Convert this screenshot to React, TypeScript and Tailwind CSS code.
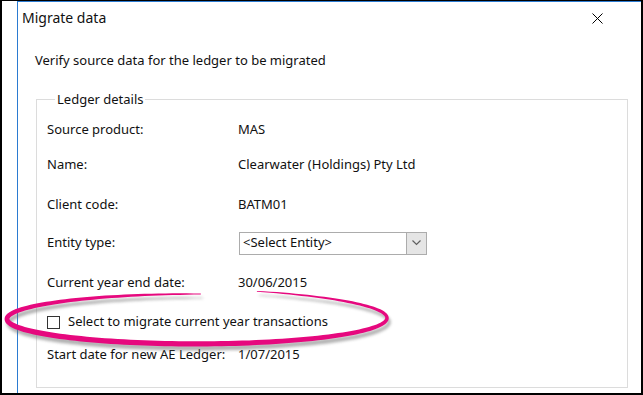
const font = "font-['Segoe_UI','Noto_Sans',sans-serif]"

function buildRing() {
  const cx = 195
  const cy = 318
  const rx = 190
  const ry = 25
  const t0 = Math.PI * 1.5 + 0.02
  const t1 = -1.25
  const n = 160
  const outer: string[] = []
  const inner: string[] = []
  for (let i = 0; i <= n; i++) {
    const s = i / n
    const t = t0 + (t1 - t0) * s
    const lift = -4 * Math.pow(s, 6)
    const x = cx + rx * Math.cos(t)
    const y = cy + ry * Math.sin(t) + lift
    let dx = -rx * Math.sin(t)
    let dy = ry * Math.cos(t)
    const len = Math.hypot(dx, dy) || 1
    dx /= len
    dy /= len
    const w = 0.8 + 5.6 * Math.pow(Math.sin(Math.PI * s), 0.7) * (1 - 0.4 * s)
    outer.push(`${(x - dy * w / 2).toFixed(2)},${(y + dx * w / 2).toFixed(2)}`)
    inner.push(`${(x + dy * w / 2).toFixed(2)},${(y - dx * w / 2).toFixed(2)}`)
  }
  return 'M' + outer.join(' L') + ' L' + inner.reverse().join(' L') + ' Z'
}

function Ring() {
  const d = buildRing()
  return (
    <svg className="absolute inset-0 pointer-events-none" width={643} height={395} viewBox="0 0 643 395">
      <defs>
        <filter id="ringShadow" x="-10%" y="-50%" width="120%" height="200%">
          <feGaussianBlur stdDeviation="1.8" />
        </filter>
      </defs>
      <path d={d} fill="#6f6f6f" opacity={0.55} transform="translate(2 4)" filter="url(#ringShadow)" />
      <path d={d} fill="#e6087e" />
    </svg>
  )
}

function Row({ label, children, className = '' }: { label: string; children?: React.ReactNode; className?: string }) {
  return (
    <div className={['flex items-center h-[20px]', className].join(' ')}>
      <div className="w-[191px] shrink-0">{label}</div>
      <div className="flex items-center">{children}</div>
    </div>
  )
}

export default function App() {
  return (
    <div className={`relative w-[643px] h-[395px] bg-white border-black border-t border-l-2 border-r-2 border-b-2 flex text-[13px] text-[#111] ${font}`}>
      <div className="w-[15px] shrink-0" />
      <div className="flex-1 flex flex-col border-l border-t border-[#2b7bd1]">
        {/* title bar */}
        <div className="h-[32px] flex items-center justify-between pl-[4px] pr-[38px] shrink-0">
          <span className="text-[14px] leading-none">Migrate data</span>
          <svg width="11" height="11" viewBox="0 0 11 11">
            <path d="M0.5 0.5 L10.5 10.5 M10.5 0.5 L0.5 10.5" stroke="#000" strokeWidth="1" />
          </svg>
        </div>

        <div className="pl-[17px] mt-[18px] h-[18px] flex items-center">Verify source data for the ledger to be migrated</div>

        <fieldset className="ml-[18px] mt-[21px] w-[592px] h-[297px] border border-[#dcdcdc] pl-[10px]">
          <legend className="ml-[8px] px-[2px] leading-[16px]">Ledger details</legend>
          <div className="flex flex-col pt-[13px]">
            <Row label="Source product:">MAS</Row>
            <Row label="Name:" className="mt-[15px]">Clearwater (Holdings) Pty Ltd</Row>
            <Row label="Client code:" className="mt-[20px]">BATM01</Row>
            <Row label="Entity type:" className="mt-[18px]">
              <div className="ml-[1px] w-[188px] h-[23px] border border-[#acacac] flex items-stretch bg-white">
                <div className="flex-1 flex items-center pl-[3px]">&lt;Select Entity&gt;</div>
                <div className="w-[20px] bg-[#e5e5e5] border-l border-[#acacac] flex items-center justify-center">
                  <svg width="9" height="6" viewBox="0 0 9 6">
                    <path d="M0.5 0.5 L4.5 4.5 L8.5 0.5" fill="none" stroke="#606060" strokeWidth="1.2" />
                  </svg>
                </div>
              </div>
            </Row>
            <Row label="Current year end date:" className="mt-[20px]">30/06/2015</Row>
            <div className="mt-[19px] h-[20px] flex items-center">
              <div className="w-[13px] h-[13px] border border-[#333] bg-white shrink-0" />
              <span className="ml-[8px]">Select to migrate current year transactions</span>
            </div>
            <Row label="Start date for new AE Ledger:" className="mt-[13px]">1/07/2015</Row>
          </div>
        </fieldset>
      </div>
      <Ring />
    </div>
  )
}
